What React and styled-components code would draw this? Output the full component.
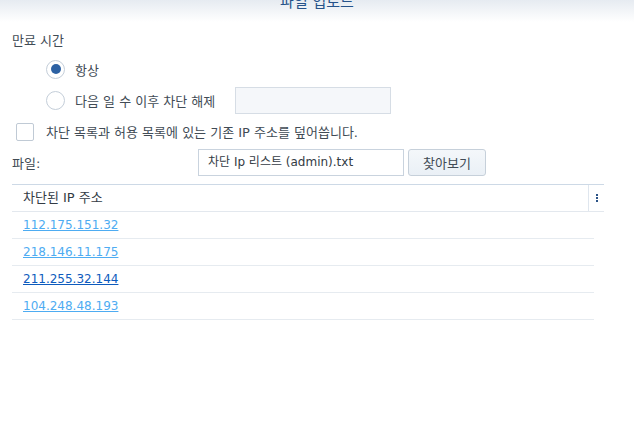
import React from "react";
import styled, { createGlobalStyle } from "styled-components";

const Global = createGlobalStyle`
  html, body {
    margin: 0;
    padding: 0;
    background: #fff;
  }
  body {
    font-family: "DejaVu Sans", "Noto Sans CJK KR", sans-serif;
    font-size: 13px;
    color: #414b55;
  }
`;

const Header = styled.div`
  height: 22px;
  overflow: hidden;
  background: linear-gradient(to bottom, #e6ebf1, #ffffff);
  display: flex;
  justify-content: center;
`;

const Title = styled.div`
  font-size: 15px;
  line-height: 16px;
  margin-top: -6px;
  color: #26538a;
`;

const Body = styled.div`
  padding: 0 12px;
  display: flex;
  flex-direction: column;
`;

const Label = styled.div`
  height: 22px;
  line-height: 22px;
  margin-top: 8px;
`;

const Row = styled.div`
  display: flex;
  align-items: center;
  height: ${(p) => p.h || 30}px;
  margin-top: ${(p) => p.mt || 0}px;
  padding-left: ${(p) => p.indent || 0}px;
`;

const Radio = styled.span`
  box-sizing: border-box;
  width: 19px;
  height: 19px;
  border-radius: 50%;
  border: 1px solid #c4ced9;
  background: #fff;
  display: flex;
  align-items: center;
  justify-content: center;
  margin-right: 10px;
  &::after {
    content: "";
    display: ${(p) => (p.checked ? "block" : "none")};
    width: 10px;
    height: 10px;
    border-radius: 50%;
    background: #2c61a3;
  }
`;

const Check = styled.span`
  box-sizing: border-box;
  width: 18px;
  height: 18px;
  border: 1px solid #c0cad5;
  border-radius: 2px;
  background: #fff;
  margin: 0 12px 0 4px;
`;

const Text = styled.span`
  white-space: nowrap;
  width: ${(p) => (p.w ? `${p.w}px` : "auto")};
`;

const Input = styled.div`
  box-sizing: border-box;
  height: 27px;
  width: ${(p) => p.w}px;
  margin-left: ${(p) => p.ml || 0}px;
  border: 1px solid ${(p) => (p.disabled ? "#d6dde5" : "#c9d3de")};
  background: ${(p) => (p.disabled ? "#f5f7fa" : "#fff")};
  padding: 0 9px;
  font-size: 12px;
  line-height: 25px;
  color: #333b44;
  white-space: nowrap;
  overflow: hidden;
`;

const Button = styled.div`
  box-sizing: border-box;
  height: 27px;
  width: 78px;
  margin-left: 4px;
  border: 1px solid #c6d0da;
  border-radius: 3px;
  background: linear-gradient(to bottom, #f4f7fa, #eaf0f6);
  display: flex;
  align-items: center;
  justify-content: center;
  color: #414b55;
`;

const Table = styled.div`
  margin-top: 8px;
  width: 592px;
`;

const HeadRow = styled.div`
  display: flex;
  height: 26px;
  border-top: 1px solid #cdd9e6;
  border-bottom: 1px solid #e3e8ee;
`;

const HeadCell = styled.div`
  flex: 1;
  padding-left: 11px;
  line-height: 26px;
  color: #333b44;
`;

const MenuCell = styled.div`
  width: 15px;
  border-left: 1px solid #dfe6ee;
  display: flex;
  flex-direction: column;
  align-items: center;
  justify-content: center;
  gap: 1px;
  span {
    width: 2px;
    height: 2px;
    background: #2b5387;
  }
`;

const DataRow = styled.div`
  width: 571px;
  height: 26px;
  border-bottom: 1px solid #e6ebf0;
  display: flex;
  align-items: center;
  padding-left: 11px;
`;

const IpLink = styled.a`
  font-size: 12px;
  color: ${(p) => (p.visited ? "#0d5bbd" : "#4eacf2")};
  text-decoration: underline;
  cursor: pointer;
`;

const ips = [
  { ip: "112.175.151.32" },
  { ip: "218.146.11.175" },
  { ip: "211.255.32.144", visited: true },
  { ip: "104.248.48.193" },
];

export default function App() {
  return (
    <>
      <Global />
      <Header>
        <Title>파일 업로드</Title>
      </Header>
      <Body>
        <Label>만료 시간</Label>
        <Row indent={34} mt={2}>
          <Radio checked />
          <Text>항상</Text>
        </Row>
        <Row indent={34} h={28} mt={2}>
          <Radio />
          <Text>다음 일 수 이후 차단 해제</Text>
          <Input w={156} ml={20} disabled />
        </Row>
        <Row h={27} mt={4}>
          <Check />
          <Text>차단 목록과 허용 목록에 있는 기존 IP 주소를 덮어씁니다.</Text>
        </Row>
        <Row h={27} mt={4}>
          <Text w={186}>파일:</Text>
          <Input w={206}>차단 Ip 리스트 (admin).txt</Input>
          <Button>찾아보기</Button>
        </Row>
        <Table>
          <HeadRow>
            <HeadCell>차단된 IP 주소</HeadCell>
            <MenuCell>
              <span />
              <span />
              <span />
            </MenuCell>
          </HeadRow>
          {ips.map((r) => (
            <DataRow key={r.ip}>
              <IpLink visited={r.visited}>{r.ip}</IpLink>
            </DataRow>
          ))}
        </Table>
      </Body>
    </>
  );
}
